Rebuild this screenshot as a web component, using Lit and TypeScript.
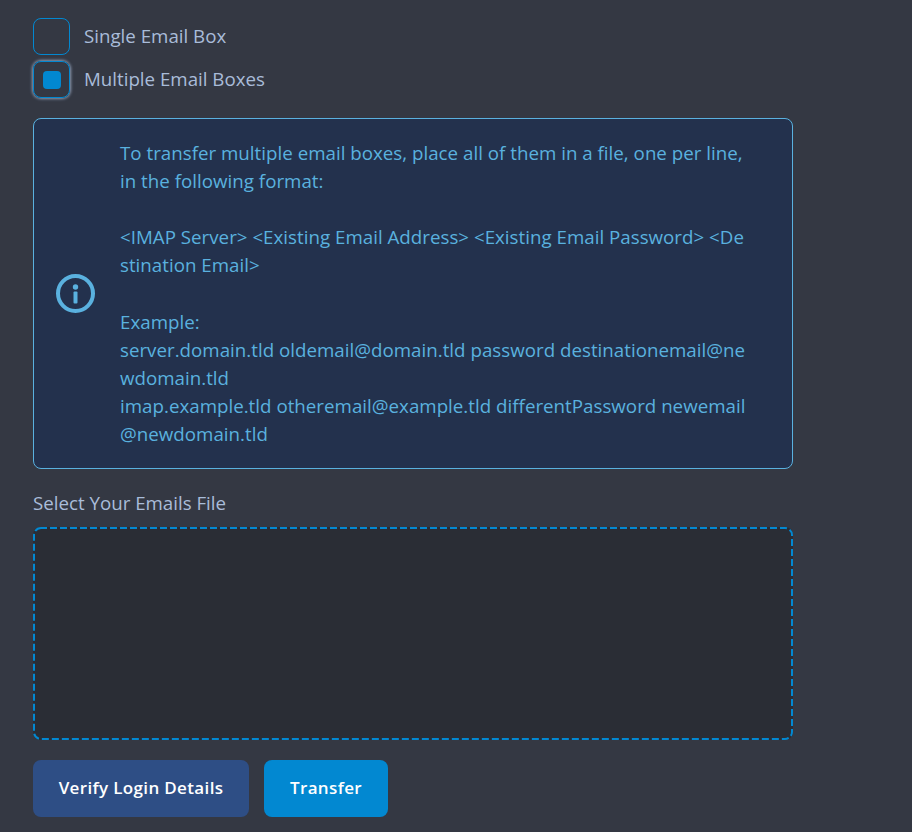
import { LitElement, html, css } from "lit";
import { customElement } from "lit/decorators.js";

@customElement("app-root")
export class AppRoot extends LitElement {
  static styles = css`
    :host { display: block; width: 912px; height: 832px; background: #343843; font-family: "Open Sans", sans-serif; overflow: hidden; }
    .page { width: 760px; padding: 18px 0 0 33px; display: flex; flex-direction: column; }
    .options { display: flex; flex-direction: column; gap: 6px; }
    .opt { display: flex; align-items: center; gap: 14px; color: #a9bcd9; font-size: 18.72px; line-height: 28px; height: 37px; }
    .opt-text { margin-top: -2px; }
    .box { box-sizing: border-box; width: 37px; height: 37px; border: 1px solid #0288d1; border-radius: 8px; display: flex; align-items: center; justify-content: center; }
    .box.on { box-shadow: 0 0 3px 1px rgba(169, 188, 217, 0.75); }
    .dot { width: 18px; height: 18px; border-radius: 4px; background: #0288d1; }
    .info { box-sizing: border-box; margin-top: 20px; height: 351px; border: 1px solid #5ab1df; border-radius: 8px; background: #23314d; display: flex; align-items: center; padding: 0 22px; color: #5ab1df; font-size: 18.72px; line-height: 28.08px; }
    .icon { width: 40px; height: 40px; flex: none; margin-right: 24px; }
    .text { white-space: pre-wrap; word-break: break-all; overflow-wrap: anywhere; width: 630px; flex: none; letter-spacing: 0.02px; }
    .label { margin-top: 20px; color: #a9bcd9; font-size: 18.72px; line-height: 28px; }
    .drop { position: relative; margin-top: 10px; height: 213px; border-radius: 8px; background: #2a2d35; }
    .dash { position: absolute; inset: 0; width: 100%; height: 100%; }
    .buttons { margin-top: 20px; display: flex; gap: 15px; }
    button { height: 57px; border: 0; border-radius: 8px; color: #fff; font: 600 17px "Open Sans", sans-serif; letter-spacing: 0.35px; padding: 0 0 2px; }
    .verify { background: #2e4e85; width: 216px; }
    .transfer { background: #0288d1; width: 124px; }
  `;

  render() {
    return html`<div class="page">
      <div class="options">
        <div class="opt"><span class="box"></span><span class="opt-text">Single Email Box</span></div>
        <div class="opt"><span class="box on"><span class="dot"></span></span><span class="opt-text">Multiple Email Boxes</span></div>
      </div>
      <div class="info">
        <svg class="icon" viewBox="0 0 40 40" fill="none">
          <circle cx="19.5" cy="19.5" r="17.5" stroke="#5ab1df" stroke-width="4"/>
          <circle cx="19.5" cy="13" r="2.7" fill="#5ab1df"/>
          <rect x="17.5" y="17.5" width="4" height="12" rx="1" fill="#5ab1df"/>
        </svg>
        <div class="text">To transfer multiple email boxes, place all of them in a file, one per line, in the following format:

&lt;IMAP Server&gt; &lt;Existing Email Address&gt; &lt;Existing Email Password&gt; &lt;Destination Email&gt;

Example:
server.domain.tld oldemail@domain.tld password destinationemail@newdomain.tld
imap.example.tld otheremail@example.tld differentPassword newemail@newdomain.tld</div>
      </div>
      <div class="label">Select Your Emails File</div>
      <div class="drop">
        <svg class="dash" viewBox="0 0 760 213" fill="none">
          <rect x="1" y="1" width="758" height="211" rx="7" stroke="#0288d1" stroke-width="2" stroke-dasharray="7 3" stroke-dashoffset="1"/>
        </svg>
      </div>
      <div class="buttons">
        <button class="verify">Verify Login Details</button>
        <button class="transfer">Transfer</button>
      </div>
    </div>`;
  }
}
